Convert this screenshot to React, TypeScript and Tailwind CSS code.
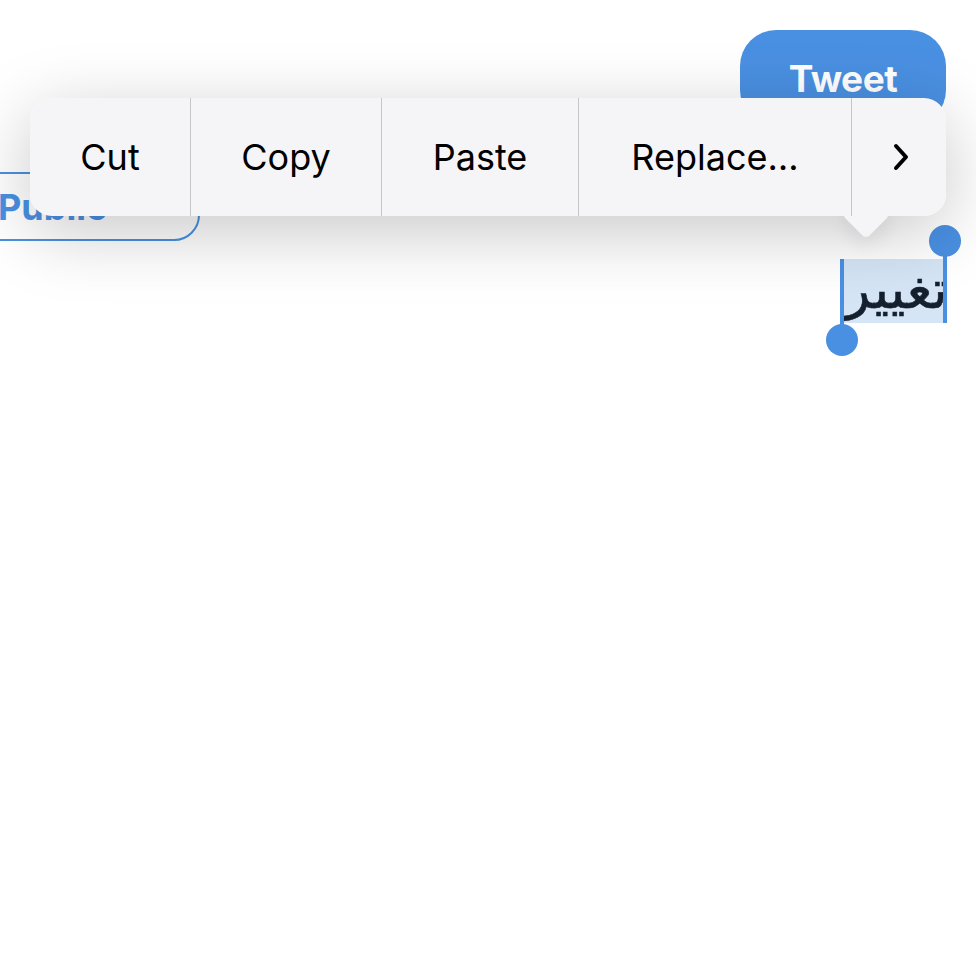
import React from "react";

export default function App() {
  const font = { fontFamily: "Inter, 'Noto Sans', 'Liberation Sans', sans-serif" };
  return (
    <div className="relative w-[976px] h-[976px] bg-white overflow-hidden" style={font}>
      {/* Background content */}
      <div className="flex justify-end pt-[30px] pr-[30px]">
        <div className="w-[206px] h-[96px] rounded-[36px] bg-[#4a90e2] flex items-start justify-center pt-[30px]">
          <span className="text-white font-bold text-[37px] leading-none tracking-[-0.5px]">Tweet</span>
        </div>
      </div>
      <div className="absolute left-[-40px] top-[172px] w-[240px] h-[69px] rounded-[26px] border-2 border-[#4a90e2] flex items-center pl-[36px] gap-3">
        <span className="text-[#4a90e2] font-bold text-[36px] leading-none">Public</span>
        <svg width="16" height="10" viewBox="0 0 16 10"><path d="M2 2 L8 8 L14 2" stroke="#4a90e2" strokeWidth="2.5" fill="none" strokeLinecap="round" /></svg>
      </div>

      {/* Selected text */}
      <div className="absolute right-[30px] top-[259px] flex">
        <div className="relative w-[106px] h-[64px] bg-[#d5e5f6] flex items-center justify-center overflow-visible">
          <span
            dir="rtl"
            className="text-[#14202e] text-[54px] leading-none mt-[-2px] ml-[6px] whitespace-nowrap"
            style={{ fontFamily: "'DejaVu Sans', 'Noto Sans', sans-serif", WebkitTextStroke: "0.6px #14202e" }}
          >
            تغيير
          </span>
          <div className="absolute left-0 top-0 w-[4px] h-[72px] bg-[#4a90e2]" />
          <div className="absolute left-[-14px] top-[65px] w-[32px] h-[32px] rounded-full bg-[#4a90e2]" />
          <div className="absolute right-[-1px] top-[-14px] w-[4px] h-[78px] bg-[#4a90e2]" />
          <div className="absolute right-[-15px] top-[-34px] w-[32px] h-[32px] rounded-full bg-[#4a90e2]" />
        </div>
      </div>

      {/* Edit menu */}
      <div className="absolute left-[30px] top-[98px] w-[916px] h-[118px]">
        <div className="absolute inset-0 rounded-[22px] shadow-[0_16px_70px_rgba(0,0,0,0.22)]" />
        <div className="absolute left-[819px] top-[100px] w-[34px] h-[34px] rotate-45 bg-[#f5f5f7] rounded-[5px] shadow-[6px_6px_20px_rgba(0,0,0,0.08)]" />
        <div className="relative h-full rounded-[22px] bg-[#f5f5f7] flex items-stretch text-black text-[36px]">
          <div className="w-[161px] flex items-center justify-center border-r border-[#c6c6c8]">Cut</div>
          <div className="w-[191px] flex items-center justify-center border-r border-[#c6c6c8]">Copy</div>
          <div className="w-[197px] flex items-center justify-center border-r border-[#c6c6c8]">Paste</div>
          <div className="w-[273px] flex items-center justify-center border-r border-[#c6c6c8]">Replace…</div>
          <div className="flex-1 flex items-center justify-center pl-[4px]">
            <svg width="20" height="30" viewBox="0 0 20 30"><path d="M5 4 L15 15 L5 26" stroke="#000" strokeWidth="4" fill="none" strokeLinecap="round" strokeLinejoin="round" /></svg>
          </div>
        </div>
      </div>
    </div>
  );
}
